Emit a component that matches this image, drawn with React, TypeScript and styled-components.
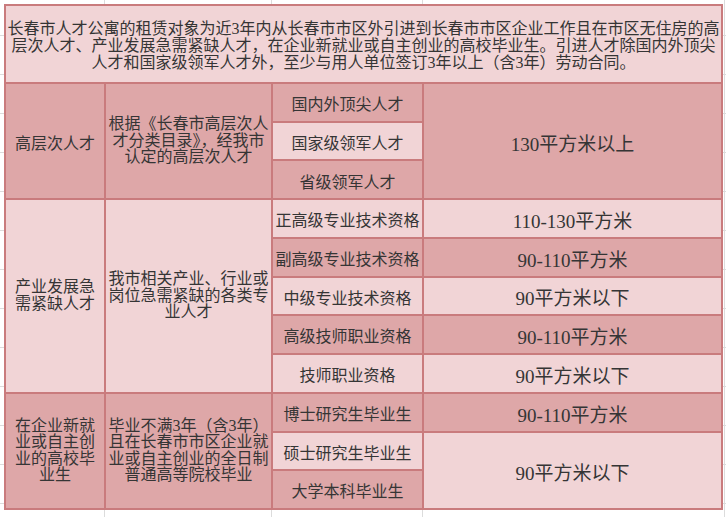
import React from "react";
import styled, { createGlobalStyle } from "styled-components";

const COLOR = {
  light: "#f1d4d6",
  dark: "#dea7a8",
  border: "#c97b7d",
  text: "#353535",
  grid: "#dcdcdc",
};

const GlobalStyle = createGlobalStyle`
  html, body {
    margin: 0;
    padding: 0;
    background: #ffffff;
  }
  body {
    font-family: "Liberation Serif", "Noto Sans CJK SC", serif;
    color: ${COLOR.text};
  }
`;

// 表格外面露出来的那一圈电子表格网格线
const Sheet = styled.div`
  width: 726px;
  height: 517px;
  box-sizing: border-box;
  padding: 4px 3px 7px 4px;
  background-color: #ffffff;
  background-image:
    linear-gradient(${COLOR.grid}, ${COLOR.grid}),
    linear-gradient(${COLOR.grid}, ${COLOR.grid}),
    linear-gradient(${COLOR.grid}, ${COLOR.grid}),
    linear-gradient(${COLOR.grid}, ${COLOR.grid}),
    repeating-linear-gradient(
      to bottom,
      transparent 0 38px,
      ${COLOR.grid} 38px 39px
    );
  background-size: 1px 100%, 1px 100%, 1px 100%, 1px 100%, 100% 100%;
  background-position: 104px 0, 271px 0, 422px 0, 724px 0, 0 -3px;
  background-repeat: no-repeat;
`;

const Table = styled.div`
  display: grid;
  grid-template-columns: 98px 165px 149px 297px;
  grid-template-rows: 76px repeat(11, 1fr);
  gap: 2px;
  padding: 2px;
  width: 719px;
  height: 506px;
  box-sizing: border-box;
  background: ${COLOR.border};
`;

const Cell = styled.div<{
  $tone: "light" | "dark";
  $col: string;
  $row: string;
  $multi?: boolean;
}>`
  grid-column: ${(p) => p.$col};
  grid-row: ${(p) => p.$row};
  background: ${(p) => (p.$tone === "dark" ? COLOR.dark : COLOR.light)};
  display: flex;
  align-items: center;
  justify-content: center;
  text-align: center;
  font-size: 16px;
  line-height: 16.5px;
  padding: ${(p) => (p.$multi ? "0 1px" : "6px 1px 0")};
  overflow: hidden;
  white-space: nowrap;
`;

// 面积一栏字号稍大
const AreaCell = styled(Cell)`
  font-size: 19px;
  line-height: 19px;
`;

const HeaderCell = styled(Cell)`
  line-height: 17px;
  padding: 3px 1px 0;
`;

type Tone = "light" | "dark";

type CellData = {
  col: string;
  row: string;
  tone: Tone;
  lines: string[];
};

const header = [
  "长春市人才公寓的租赁对象为近3年内从长春市市区外引进到长春市市区企业工作且在市区无住房的高",
  "层次人才、产业发展急需紧缺人才，在企业新就业或自主创业的高校毕业生。引进人才除国内外顶尖",
  "人才和国家级领军人才外，至少与用人单位签订3年以上（含3年）劳动合同。",
];

const cells: CellData[] = [
  // 高层次人才
  { col: "1", row: "2 / 5", tone: "dark", lines: ["高层次人才"] },
  {
    col: "2",
    row: "2 / 5",
    tone: "dark",
    lines: ["根据《长春市高层次人", "才分类目录》，经我市", "认定的高层次人才"],
  },
  { col: "3", row: "2", tone: "dark", lines: ["国内外顶尖人才"] },
  { col: "3", row: "3", tone: "light", lines: ["国家级领军人才"] },
  { col: "3", row: "4", tone: "dark", lines: ["省级领军人才"] },
  { col: "4", row: "2 / 5", tone: "dark", lines: ["130平方米以上"] },

  // 产业发展急需紧缺人才
  { col: "1", row: "5 / 10", tone: "light", lines: ["产业发展急", "需紧缺人才"] },
  {
    col: "2",
    row: "5 / 10",
    tone: "light",
    lines: ["我市相关产业、行业或", "岗位急需紧缺的各类专", "业人才"],
  },
  { col: "3", row: "5", tone: "light", lines: ["正高级专业技术资格"] },
  { col: "4", row: "5", tone: "light", lines: ["110-130平方米"] },
  { col: "3", row: "6", tone: "dark", lines: ["副高级专业技术资格"] },
  { col: "4", row: "6", tone: "dark", lines: ["90-110平方米"] },
  { col: "3", row: "7", tone: "light", lines: ["中级专业技术资格"] },
  { col: "4", row: "7", tone: "light", lines: ["90平方米以下"] },
  { col: "3", row: "8", tone: "dark", lines: ["高级技师职业资格"] },
  { col: "4", row: "8", tone: "dark", lines: ["90-110平方米"] },
  { col: "3", row: "9", tone: "light", lines: ["技师职业资格"] },
  { col: "4", row: "9", tone: "light", lines: ["90平方米以下"] },

  // 高校毕业生
  {
    col: "1",
    row: "10 / 13",
    tone: "dark",
    lines: ["在企业新就", "业或自主创", "业的高校毕", "业生"],
  },
  {
    col: "2",
    row: "10 / 13",
    tone: "dark",
    lines: ["毕业不满3年（含3年）", "且在长春市市区企业就", "业或自主创业的全日制", "普通高等院校毕业"],
  },
  { col: "3", row: "10", tone: "dark", lines: ["博士研究生毕业生"] },
  { col: "4", row: "10", tone: "dark", lines: ["90-110平方米"] },
  { col: "3", row: "11", tone: "light", lines: ["硕士研究生毕业生"] },
  { col: "3", row: "12", tone: "dark", lines: ["大学本科毕业生"] },
  { col: "4", row: "11 / 13", tone: "light", lines: ["90平方米以下"] },
];

// 单元格里的手动换行，和原表格一致
const Lines = ({ lines }: { lines: string[] }): JSX.Element => (
  <span>
    {lines.map((line, i) => (
      <React.Fragment key={line}>
        {i > 0 && <br />}
        {line}
      </React.Fragment>
    ))}
  </span>
);

const App = (): JSX.Element => {
  return (
    <>
      <GlobalStyle />
      <Sheet>
        <Table>
          <HeaderCell $tone="light" $col="1 / 5" $row="1" $multi>
            <Lines lines={header} />
          </HeaderCell>
          {cells.map((c) => {
            const Comp = c.col === "4" ? AreaCell : Cell;
            return (
              <Comp
                key={`${c.col}-${c.row}`}
                $tone={c.tone}
                $col={c.col}
                $row={c.row}
                $multi={c.lines.length > 1}
              >
                <Lines lines={c.lines} />
              </Comp>
            );
          })}
        </Table>
      </Sheet>
    </>
  );
};

export default App;
